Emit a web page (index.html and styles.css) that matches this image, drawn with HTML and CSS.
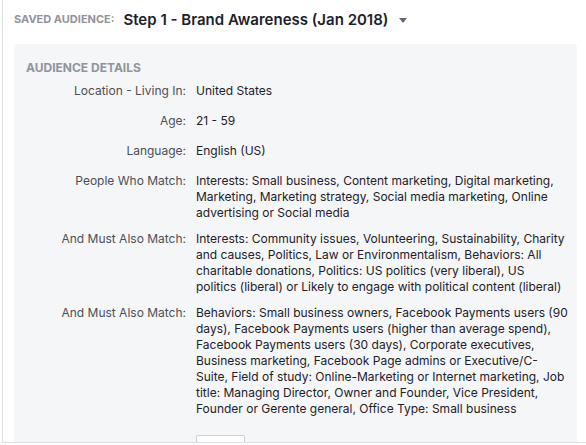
FILE: index.html
```html
<!DOCTYPE html>
<html lang="en">
<head>
    <meta charset="UTF-8">
    <meta name="viewport" content="width=device-width, initial-scale=1.0">
    <title>Saved Audience</title>
    <link rel="stylesheet" href="styles.css">
</head>
<body>
  <div class="box">
    <div class="header">
      <span class="header-label">Saved Audience:</span>
      <span class="header-name">Step 1 - Brand Awareness (Jan 2018)</span>
      <span class="caret"></span>
    </div>

    <div class="panel">
      <div class="panel-title">Audience Details</div>
      <div class="rows">
        <div class="row">
          <div class="label">Location - Living In:</div>
          <div class="value">United States</div>
        </div>
        <div class="row">
          <div class="label">Age:</div>
          <div class="value">21 - 59</div>
        </div>
        <div class="row">
          <div class="label">Language:</div>
          <div class="value">English (US)</div>
        </div>
        <div class="row">
          <div class="label">People Who Match:</div>
          <div class="value">Interests: Small business, Content marketing, Digital marketing, Marketing, Marketing strategy, Social media marketing, Online advertising or Social media</div>
        </div>
        <div class="row">
          <div class="label">And Must Also Match:</div>
          <div class="value">Interests: Community issues, Volunteering, Sustainability, Charity and causes, Politics, Law or Environmentalism, Behaviors: All charitable donations, Politics: US politics (very liberal), US politics (liberal) or Likely to engage with political content (liberal)</div>
        </div>
        <div class="row">
          <div class="label">And Must Also Match:</div>
          <div class="value">Behaviors: Small business owners, Facebook Payments users (90 days), Facebook Payments users (higher than average spend), Facebook Payments users (30 days), Corporate executives, Business marketing, Facebook Page admins or Executive/C-Suite, Field of study: Online-Marketing or Internet marketing, Job title: Managing Director, Owner and Founder, Vice President, Founder or Gerente general, Office Type: Small business</div>
        </div>
      </div>
      <div class="actions">
        <button class="edit" type="button">Edit</button>
      </div>
    </div>
  </div>
</body>
</html>
```

FILE: styles.css
```css
body {
  margin: 0;
  background-color: #fff;
  font-family: Inter, "Liberation Sans", sans-serif;
  overflow: hidden;
}

.box {
  margin-left: 2px;
  height: 442px;
  border-left: 1px solid #dddfe2;
  border-bottom: 1px solid #dddfe2;
  padding: 0 9px 0 11px;
  overflow: hidden;
}

.header {
  display: flex;
  align-items: center;
  height: 44px;
  padding-bottom: 6px;
  box-sizing: border-box;
}

.header-label {
  color: #90949c;
  font-size: 11px;
  font-weight: 700;
  text-transform: uppercase;
  margin-right: 9px;
}

.header-name {
  color: #1d2129;
  font-size: 15px;
  font-weight: 600;
}

.caret {
  width: 0;
  height: 0;
  margin-left: 11px;
  margin-top: 2px;
  border-left: 4px solid transparent;
  border-right: 4px solid transparent;
  border-top: 5px solid #606770;
}

.panel {
  background-color: #f5f6f7;
  border-radius: 4px 4px 0 0;
  padding: 17px 9px 0 12px;
  height: 420px;
}

.panel-title {
  color: #90949c;
  font-size: 12px;
  font-weight: 700;
  text-transform: uppercase;
  line-height: 14px;
}

.rows {
  display: flex;
  flex-direction: column;
  gap: 10px;
  margin-top: 8px;
}

.row {
  display: grid;
  grid-template-columns: 160px 1fr;
  column-gap: 10px;
  min-height: 20px;
  font-size: 12px;
  line-height: 16px;
}

.label {
  color: #4b4f56;
  text-align: right;
}

.value {
  color: #1d2129;
}

.actions {
  padding-left: 170px;
  margin-top: 18px;
}

.edit {
  width: 49px;
  height: 24px;
  background-color: #fff;
  border: 1px solid #ccd0d5;
  border-radius: 2px;
  color: #4b4f56;
  font-family: inherit;
  font-size: 12px;
  font-weight: 600;
}
```
